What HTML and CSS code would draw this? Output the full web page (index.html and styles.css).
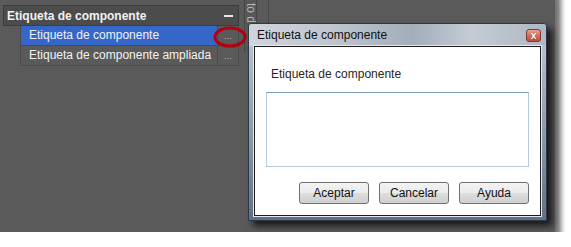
FILE: index.html
```html
<!DOCTYPE html>
<html lang="es">
<head>
    <meta charset="UTF-8">
    <title>Etiqueta de componente</title>
    <link rel="stylesheet" href="styles.css">
</head>
<body>

    <div class="panel">
        <div class="grid">
            <div class="grid-header">
                <span>Etiqueta de componente</span>
                <span class="collapse"></span>
            </div>
            <div class="row selected">
                <div class="cell-label">Etiqueta de componente</div>
                <div class="cell-btn">...</div>
            </div>
            <div class="row">
                <div class="cell-label">Etiqueta de componente ampliada</div>
                <div class="cell-btn">...</div>
            </div>
        </div>

        <div class="strip"><span>to d</span></div>
        <div class="dock"></div>

        <!-- marker round the ellipsis button -->
        <svg class="marker" width="34" height="22" viewBox="0 0 34 22">
            <ellipse cx="17" cy="11" rx="15" ry="9" fill="none" stroke="#b3000c" stroke-width="3"/>
        </svg>

        <div class="dialog">
            <div class="title-bar">
                <span>Etiqueta de componente</span>
                <span class="close-btn">x</span>
            </div>
            <div class="frame">
                <div class="content">
                    <div class="label">Etiqueta de componente</div>
                    <div class="textbox"></div>
                    <div class="buttons">
                        <button class="btn">Aceptar</button>
                        <button class="btn">Cancelar</button>
                        <button class="btn">Ayuda</button>
                    </div>
                </div>
            </div>
        </div>
    </div>

</body>
</html>
```

FILE: styles.css
```css
body {
    margin: 0;
    background: #fff;
    font-family: "Liberation Sans", Arial, sans-serif;
    font-size: 12px;
    overflow: hidden;
}
.panel {
    position: relative;
    display: flex;
    align-items: flex-start;
    width: 555px;
    height: 242px;
    margin-top: -10px;
    padding: 15px 0 0 3px;
    box-sizing: border-box;
    background: #5a5a5a;
    box-shadow: 6px 6px 5px rgba(0, 0, 0, 0.55);
}
.grid {
    width: 236px;
    color: #f2f2f2;
}
.grid-header {
    display: flex;
    justify-content: space-between;
    align-items: center;
    height: 21px;
    padding: 0 5px 0 3px;
    box-sizing: border-box;
    border: 1px solid #3d3d3d;
    background: #4c4c4c;
    font-weight: bold;
}
.collapse {
    width: 9px;
    height: 2px;
    background: #e6e6e6;
}
.row {
    display: flex;
    height: 19px;
    margin-left: 17px;
    border-bottom: 1px solid #4b4b4b;
    border-left: 1px solid #4b4b4b;
}
.cell-label {
    flex: 1;
    padding-left: 8px;
    line-height: 18px;
}
.selected .cell-label {
    background: #3467c8;
}
.cell-btn {
    width: 20px;
    border-left: 1px solid #4b4b4b;
    border-right: 1px solid #4b4b4b;
    color: #bbb;
    font-size: 9px;
    line-height: 20px;
    text-align: center;
}
.strip {
    width: 11px;
    height: 52px;
    margin: -5px 0 0 5px;
    border-left: 1px solid #454545;
    border-right: 1px solid #454545;
    background: #585858;
}
.strip span {
    display: block;
    writing-mode: vertical-rl;
    color: #b4b4b4;
    font-size: 12px;
    line-height: 11px;
    margin-top: 3px;
}
.dock {
    width: 11px;
    height: 40px;
    margin-top: -5px;
    border-right: 1px solid #4a4a4a;
}
.marker {
    position: absolute;
    left: 213px;
    top: 36px;
}
.dialog {
    position: absolute;
    left: 248px;
    top: 33px;
    width: 299px;
    height: 198px;
    box-sizing: border-box;
    border: 1px solid #2f3944;
    border-radius: 4px 4px 0 0;
    background: linear-gradient(#c3cbd4, #a3afbc 30%, #8996a5 60%, #5f7186);
    box-shadow: 5px 5px 7px rgba(0, 0, 0, 0.75);
    display: flex;
    flex-direction: column;
}
.title-bar {
    display: flex;
    justify-content: space-between;
    align-items: center;
    height: 22px;
    padding: 0 5px 0 8px;
    border-radius: 3px 3px 0 0;
    background: linear-gradient(to right, #cfd5dc, #bcc4cd 30%, #a3aebb 55%, #c4cbd3 75%, #aeb8c3);
    color: #111;
}
.close-btn {
    width: 15px;
    height: 13px;
    box-sizing: border-box;
    border: 1px solid #7b3a30;
    border-radius: 3px;
    background: linear-gradient(#eaa596, #d6705c 50%, #c24a35);
    color: #fff;
    font-weight: bold;
    font-size: 11px;
    line-height: 10px;
    text-align: center;
    text-shadow: 0 0 1px #4a1a12;
}
.frame {
    flex: 1;
    padding: 0 5px 4px;
    display: flex;
}
.content {
    flex: 1;
    border: 1px solid #1b1b1b;
    background: #fff;
    padding: 20px 11px 0;
    box-shadow: 0 0 0 1px #e6eaee;
}
.label {
    padding-left: 5px;
    margin-bottom: 11px;
    color: #2a2320;
}
.textbox {
    height: 75px;
    box-sizing: border-box;
    border: 1px solid #b6cbde;
    border-top-color: #7c9dbd;
}
.buttons {
    display: flex;
    justify-content: flex-end;
    gap: 10px;
    margin-top: 15px;
}
.btn {
    width: 70px;
    height: 22px;
    padding: 0;
    border: 1px solid #707070;
    border-radius: 3px;
    background: linear-gradient(#f3f3f3, #ebebeb 50%, #dddddd 50%, #cfcfcf);
    font-family: "Liberation Sans", Arial, sans-serif;
    font-size: 12px;
    color: #111;
}
```
